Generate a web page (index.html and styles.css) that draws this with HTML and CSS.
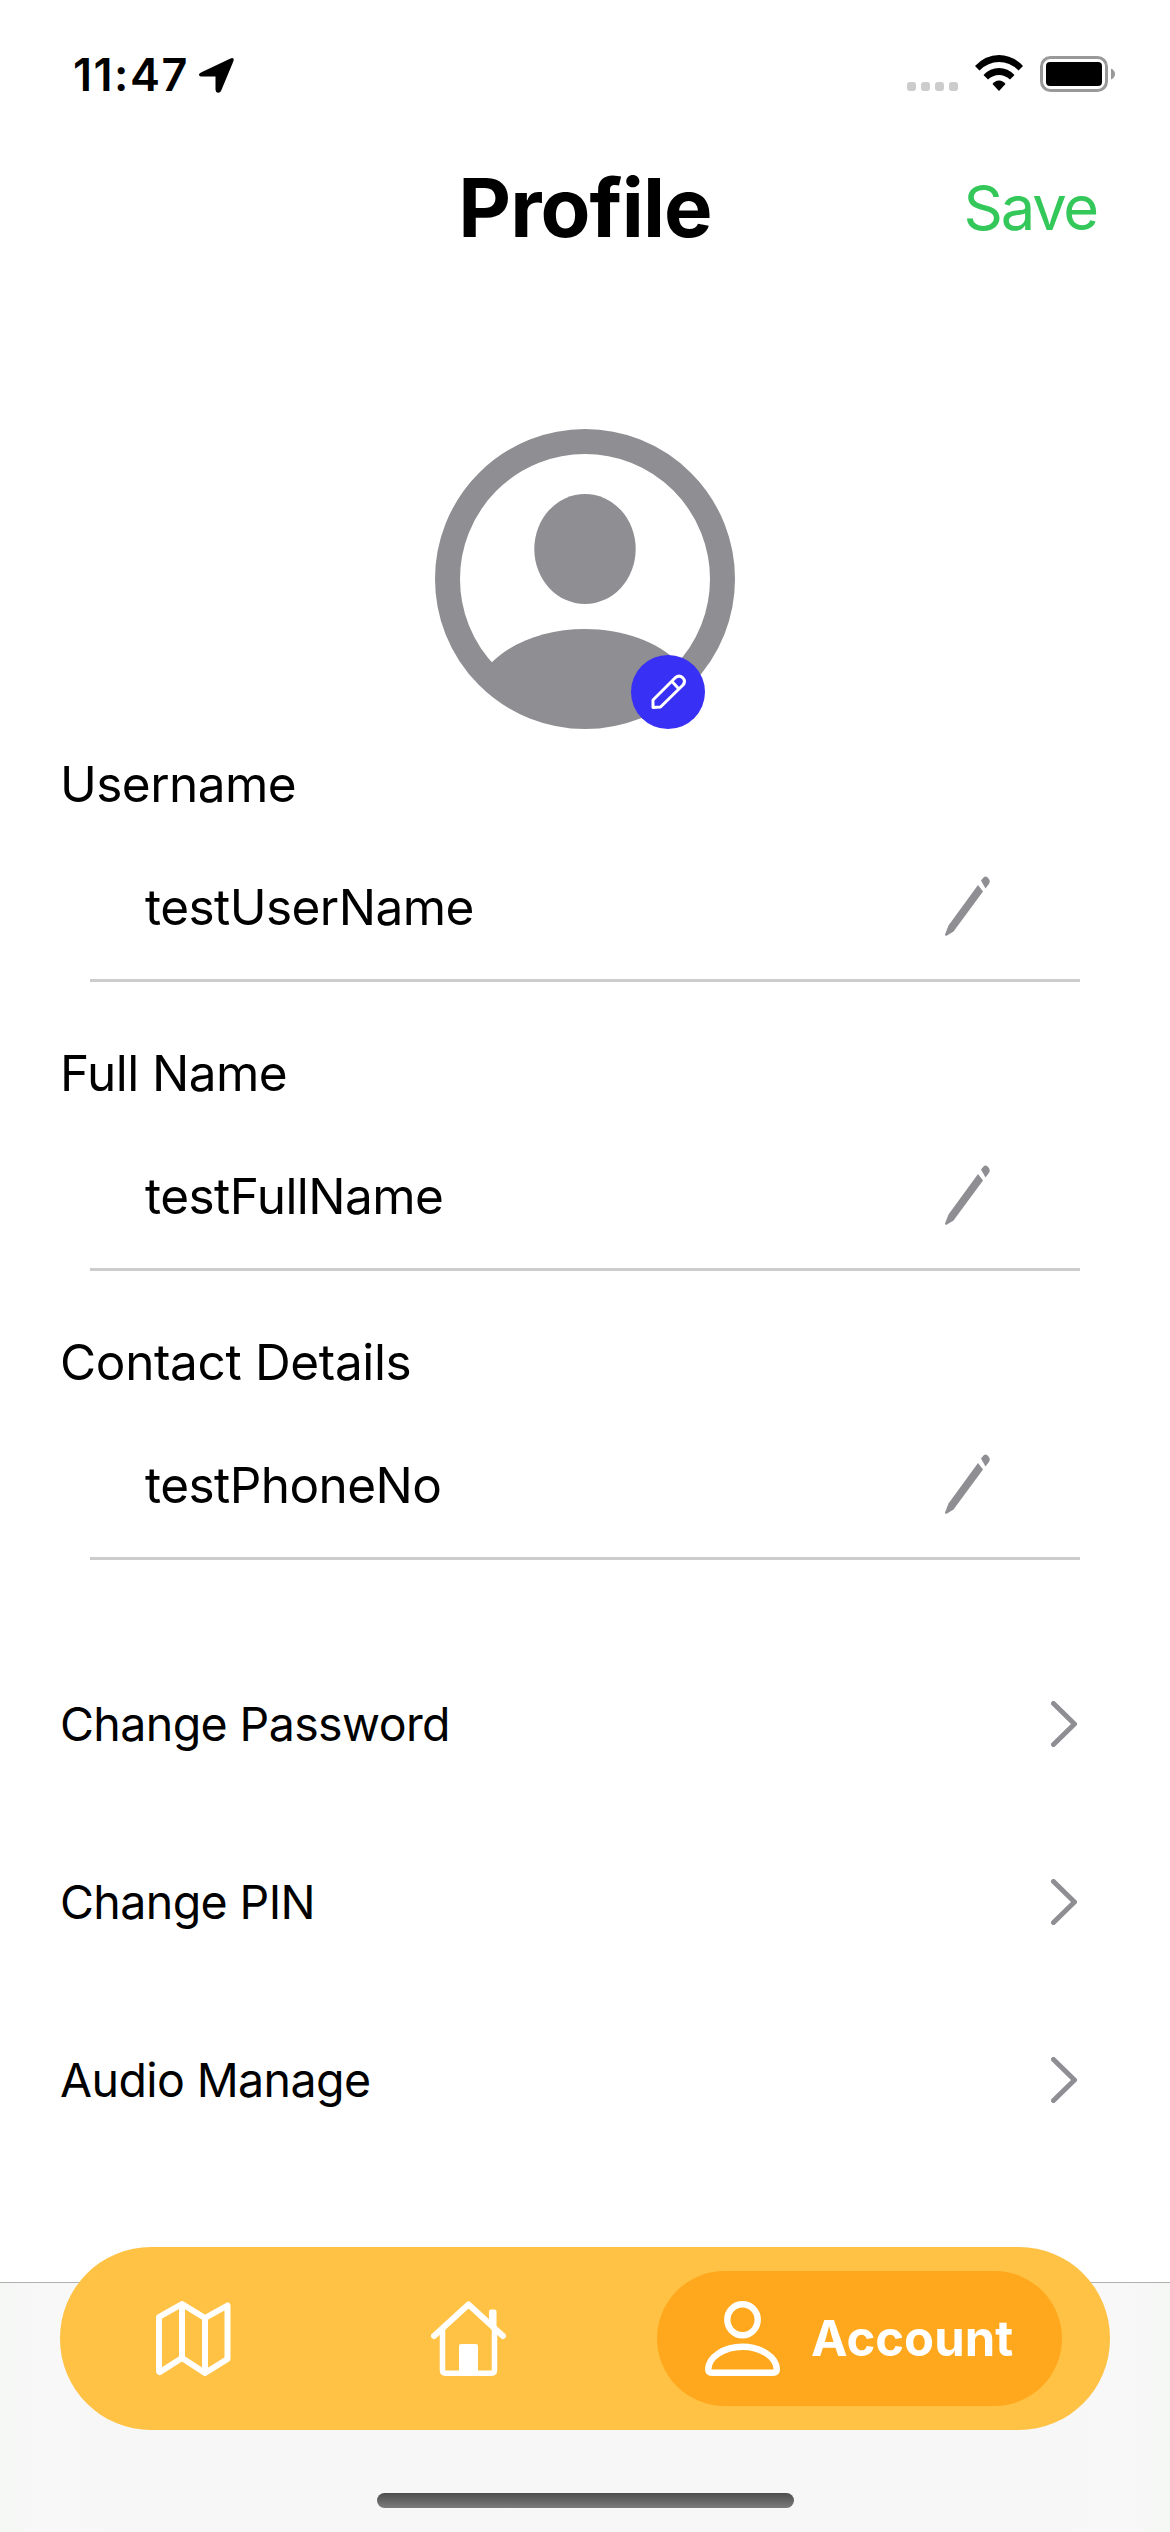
FILE: index.html
```
<!DOCTYPE html>
<html lang="en">
<head>
<meta charset="utf-8">
<title>Profile</title>
<link rel="stylesheet" href="styles.css">
</head>
<body>
<div class="screen">
  <header class="status">
    <span class="time">11:47</span>
    <svg class="location" viewBox="0 0 36 36"><path d="M3 15 31.500 1.500Q35.500 0 34.500 4L22 34Q20.500 36.500 18.500 35.500 16.500 35 16.500 32.500V19.500H3Q0 19.500 0 17.500 0 16.200 3 15Z"/></svg>
    <svg class="signal" viewBox="0 0 51 9" fill="#ccc"><rect width="9" height="9" rx="3"/><rect x="14" width="9" height="9" rx="3"/><rect x="28" width="9" height="9" rx="3"/><rect x="42" width="9" height="9" rx="3"/></svg>
    <svg class="wifi" viewBox="0 0 48 36"><path d="M0 11Q10.500 0 24 0T48 11L43.500 15.500Q35 7 24 7T4.500 15.500Z"/><path d="M8.500 20Q15 13 24 13T39.500 20L35 24.500Q30 20 24 20T13 24.500Z"/><path d="M17.500 29Q20 25.500 24 25.500T30.500 29L24 36Z"/></svg>
    <svg class="battery" viewBox="0 0 75 36"><rect x="1.500" y="1.500" width="65" height="33" rx="9" fill="none" stroke="#999" stroke-width="3"/><rect x="6" y="6" width="56" height="24" rx="4"/><path d="M71 12.500Q75 14.500 75 18T71 23.500Z" fill="#999"/></svg>
  </header>

  <div class="titlebar">
    <h1 class="title">Profile</h1>
    <span class="save">Save</span>
  </div>

  <div class="avatar">
    <svg class="avatar-image" viewBox="0 0 300 300"><circle cx="150" cy="150" r="137.500" fill="none" stroke="#8e8e93" stroke-width="25"/><ellipse cx="150" cy="120" rx="50.700" ry="55" fill="#8e8e93"/><path d="M56.500 233.500C78 212 113 200 150 200S222 212 243.500 233.500L240 258A137 137 0 0 1 60 258Z" fill="#8e8e93"/></svg>
    <svg class="avatar-edit" viewBox="0 0 74 74"><circle cx="37" cy="37" r="37" fill="#3830f5"/><g fill="none" stroke="#fff" stroke-width="3" stroke-linejoin="round"><path d="M22 52.500V45L44.500 22.500Q48 19.800 51.500 22.500 55.200 26 52 30L29.500 52Z"/><path d="M41 26.500 47.500 33.500"/></g></svg>
  </div>

  <section class="field">
    <h2 class="label">Username</h2>
    <div class="entry"><span class="value">testUserName</span><svg class="pencil" viewBox="0 0 45 60"><path d="M33 9 38 15.500 8.500 55.500 2 59.500Q0 60.500 0 58.500L3.500 49.500Z"/><path d="M36 4.500 38.500 1.500Q41-1 43.500 2.500 46 5.500 43.500 8.500L40.500 12.500Z"/></svg></div>
  </section>
  <section class="field">
    <h2 class="label">Full Name</h2>
    <div class="entry"><span class="value">testFullName</span><svg class="pencil" viewBox="0 0 45 60"><path d="M33 9 38 15.500 8.500 55.500 2 59.500Q0 60.500 0 58.500L3.500 49.500Z"/><path d="M36 4.500 38.500 1.500Q41-1 43.500 2.500 46 5.500 43.500 8.500L40.500 12.500Z"/></svg></div>
  </section>
  <section class="field">
    <h2 class="label contact">Contact Details</h2>
    <div class="entry"><span class="value">testPhoneNo</span><svg class="pencil" viewBox="0 0 45 60"><path d="M33 9 38 15.500 8.500 55.500 2 59.500Q0 60.500 0 58.500L3.500 49.500Z"/><path d="M36 4.500 38.500 1.500Q41-1 43.500 2.500 46 5.500 43.500 8.500L40.500 12.500Z"/></svg></div>
  </section>

  <nav class="links">
    <a class="link"><span>Change Password</span><svg class="chevron" viewBox="0 0 26 46"><path d="M2.500 2.500 23.500 23 2.500 43.500"/></svg></a>
    <a class="link"><span>Change PIN</span><svg class="chevron" viewBox="0 0 26 46"><path d="M2.500 2.500 23.500 23 2.500 43.500"/></svg></a>
    <a class="link"><span>Audio Manage</span><svg class="chevron" viewBox="0 0 26 46"><path d="M2.500 2.500 23.500 23 2.500 43.500"/></svg></a>
  </nav>

  <footer class="bottom">
    <nav class="tabs">
      <svg class="tab-icon" viewBox="0 0 75 75"><path d="M3 16 26 3 49 17 71.500 4.500V58L49 72 26 57 4 71Q3 71.500 3 70ZM26 3V58M49 17V72" fill="none" stroke="#fff" stroke-width="6" stroke-linejoin="round"/></svg>
      <svg class="tab-icon home" viewBox="0 0 75 75"><g fill="none" stroke="#fff" stroke-linejoin="round" stroke-linecap="round"><path d="M3 35 37.500 3.500 72 35" stroke-width="6"/><path d="M11.500 29V69Q11.500 72.200 14.500 72.200H60.500Q63.500 72.200 63.500 69V29" stroke-width="5.500"/></g><path d="M28 75V45Q28 43 30 43H45Q47 43 47 45V75ZM58 22V10.500Q58 8.500 60 8.500H63.500Q65.500 8.500 65.500 10.500V30Z" fill="#fff"/></svg>
      <a class="tab-active">
        <svg class="person" viewBox="0 0 75 75"><g fill="none" stroke="#fff" stroke-width="6.400"><ellipse cx="37.500" cy="18.700" rx="15.200" ry="15.500"/><path d="M7 71.800Q3.200 71.800 3.200 68C3.800 56 19 45.800 37.500 45.800S71.200 56 71.800 68Q71.800 71.800 68 71.800Z"/></g></svg>
        <span class="tab-label">Account</span>
      </a>
    </nav>
    <div class="home-indicator"></div>
  </footer>
</div>
</body>
</html>
```
FILE: styles.css
```
* { box-sizing: border-box; }
body { margin: 0; background: #fff; color: #000; font-family: Inter, "Liberation Sans", sans-serif; }
h1, h2 { margin: 0; font-weight: inherit; font-size: inherit; }
svg { display: block; flex: none; }
span { white-space: nowrap; }

.screen { width: 1170px; height: 2532px; display: flex; flex-direction: column; overflow: hidden; }

.status { height: 141px; display: flex; align-items: flex-start; padding: 55px 55px 0 73px; }
.time { width: 126px; font-size: 45px; line-height: 39px; font-weight: 600; letter-spacing: 1.500px; }
.location { width: 36px; height: 36px; margin-top: 2px; }
.signal { width: 51px; height: 9px; margin: 27px 17px 0 auto; }
.wifi { width: 48px; height: 36px; }
.battery { width: 75px; height: 36px; margin: 1px 0 0 17px; }

.titlebar { height: 133px; display: grid; grid-template-columns: 1fr auto 1fr; align-items: center; }
.title { grid-column: 2; font-size: 81.500px; line-height: 133px; font-weight: 700; letter-spacing: -0.900px; }
.save { justify-self: end; margin-right: 73px; font-size: 61.500px; color: #34c759; letter-spacing: -2.200px; }

.avatar { position: relative; width: 300px; height: 300px; margin: 155px auto 0; }
.avatar-image { width: 300px; height: 300px; }
.avatar-edit { position: absolute; right: 30px; bottom: 0; width: 74px; height: 74px; }

.field { height: 289px; font-size: 49.500px; line-height: 60px; letter-spacing: -0.550px; }
.field:first-of-type { margin-top: 25px; }
.label { padding: 0 0 0 60px; height: 60px; }
.contact { letter-spacing: -0.350px; }
.entry { margin: 27px 90px 0; height: 141px; padding: 30px 90px 0 55px; display: flex; justify-content: space-between; border-bottom: 3px solid #ccc; }
.value { padding-top: 6px; }
.pencil { width: 45px; height: 60px; margin-top: 5px; fill: #8e8e93; }

.links { display: flex; flex-direction: column; margin-top: 14px; letter-spacing: -0.600px; }
.link { height: 178px; padding: 0 93px 0 60px; display: flex; align-items: center; justify-content: space-between; font-size: 46.500px; }
.chevron { width: 26px; height: 46px; fill: none; stroke: #8e8e93; stroke-width: 5; stroke-linecap: round; stroke-linejoin: round; }

.bottom { margin-top: auto; height: 250px; border-top: 1px solid #b0b0b0; background: linear-gradient(90deg, #f5f7f5, #f8f8f8 60px, #f7f7f7 110px, #f7f7f7 1060px, #f8f8f8 1110px, #f5f7f5); }
.tabs { width: 1050px; height: 183px; margin: -36px auto 0; padding: 0 48px 0 96px; border-radius: 91px; background: #ffc244; display: flex; align-items: center; }
.tab-icon { width: 75px; height: 75px; }
.home { margin-left: 200px; }
.tab-active { width: 405px; height: 135px; margin-left: auto; padding-left: 48px; border-radius: 68px; background: #ffa81d; display: flex; align-items: center; }
.person { width: 75px; height: 75px; }
.tab-label { margin-left: 31px; font-size: 49px; font-weight: 700; color: #fff; }
.home-indicator { width: 417px; height: 15px; margin: 63px auto 0; border-radius: 8px; background: linear-gradient(#4d4d4d, #7c7c7c); }
```
